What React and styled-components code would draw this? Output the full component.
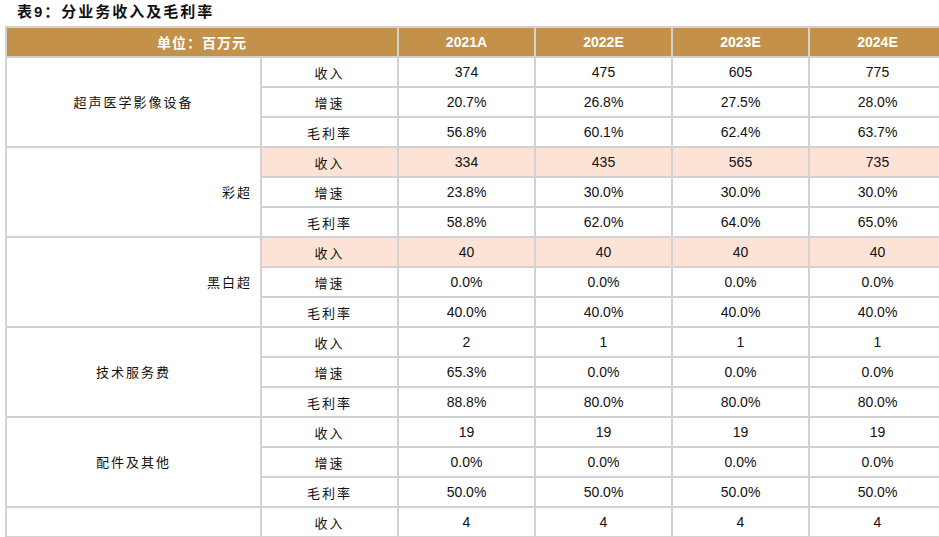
import React from "react";
import styled, {createGlobalStyle} from "styled-components";

const GlobalStyle = createGlobalStyle`
html, body {
margin: 0;
padding: 0;
background: #fff;
overflow: hidden;
}
body {
font-family: "Liberation Sans", Arial, "Noto Sans CJK SC", sans-serif;
color: #111;
}
`;

const Page = styled.div`
width: 939px;
height: 537px;
overflow: hidden;
padding: 0 0 0 5px;
box-sizing: border-box;
`;

const Title = styled.h1`
margin: 0;
padding: 3px 0 0 12px;
height: 24px;
box-sizing: border-box;
font-family: "Liberation Sans", "Noto Sans CJK SC", sans-serif;
font-size: 15px;
font-weight: bold;
line-height: 18px;
letter-spacing: 2px;
color: #111;
`;

const Table = styled.table`
border-collapse: collapse;
table-layout: fixed;
width: 940px;
margin-top: 2px;
`;

const Col = styled.col`
width: ${p => p.$w}px;
`;

const HeadCell = styled.th`
height: 28px;
padding: 0;
background: #c4914a;
color: #fff;
font-weight: bold;
font-size: 14px;
font-family: ${p => p.$cjk ? `"Noto Sans CJK SC", sans-serif` : `"Liberation Sans", Arial, sans-serif`};
border: 2px solid #d2d2d2;
text-align: center;
vertical-align: middle;
letter-spacing: ${p => p.$cjk ? "1px" : "0"};
`;

const GroupCell = styled.td`
padding: 0 8px 2px ${p => p.$right ? "0" : "8px"};
border: 2px solid #d2d2d2;
font-family: "Noto Sans CJK SC", sans-serif;
font-size: 13px;
text-align: ${p => p.$right ? "right" : "center"};
vertical-align: middle;
letter-spacing: 2px;
`;

const Cell = styled.td`
height: 28px;
padding: 0;
border: 2px solid #d2d2d2;
background: ${p => p.$hl ? "#fde3d6" : "#fff"};
font-family: ${p => p.$cjk ? `"Noto Sans CJK SC", sans-serif` : `"Liberation Sans", Arial, sans-serif`};
font-size: ${p => p.$cjk ? "13px" : "14px"};
text-align: center;
vertical-align: middle;
letter-spacing: ${p => p.$cjk ? "2px" : "0"};
`;

const widths = [255, 137, 137, 137, 137, 137];
const years = ["2021A", "2022E", "2023E", "2024E"];
const metrics = ["收入", "增速", "毛利率"];

const groups = [
  {name: "超声医学影像设备", right: false, hl: false, rows: [
    ["374", "475", "605", "775"],
    ["20.7%", "26.8%", "27.5%", "28.0%"],
    ["56.8%", "60.1%", "62.4%", "63.7%"],
  ]},
  {name: "彩超", right: true, hl: true, rows: [
    ["334", "435", "565", "735"],
    ["23.8%", "30.0%", "30.0%", "30.0%"],
    ["58.8%", "62.0%", "64.0%", "65.0%"],
  ]},
  {name: "黑白超", right: true, hl: true, rows: [
    ["40", "40", "40", "40"],
    ["0.0%", "0.0%", "0.0%", "0.0%"],
    ["40.0%", "40.0%", "40.0%", "40.0%"],
  ]},
  {name: "技术服务费", right: false, hl: false, rows: [
    ["2", "1", "1", "1"],
    ["65.3%", "0.0%", "0.0%", "0.0%"],
    ["88.8%", "80.0%", "80.0%", "80.0%"],
  ]},
  {name: "配件及其他", right: false, hl: false, rows: [
    ["19", "19", "19", "19"],
    ["0.0%", "0.0%", "0.0%", "0.0%"],
    ["50.0%", "50.0%", "50.0%", "50.0%"],
  ]},
  // next group is cut off at the bottom of the shot
  {name: "", right: false, hl: false, rows: [
    ["4", "4", "4", "4"],
  ]},
];

export default function App() {
  return (
    <Page>
      <GlobalStyle/>
      <Title>表9：分业务收入及毛利率</Title>
      <Table>
        <colgroup>
          {widths.map((w, i) => <Col key={i} $w={w}/>)}
        </colgroup>
        <thead>
          <tr>
            <HeadCell $cjk colSpan={2}>单位：百万元</HeadCell>
            {years.map(y => <HeadCell key={y}>{y}</HeadCell>)}
          </tr>
        </thead>
        <tbody>
          {groups.map((g, gi) => g.rows.map((vals, ri) => {
            const hl = g.hl && ri === 0;
            return (
              <tr key={gi + "-" + ri}>
                {ri === 0 && <GroupCell rowSpan={g.rows.length} $right={g.right}>{g.name}</GroupCell>}
                <Cell $cjk $hl={hl}>{metrics[ri]}</Cell>
                {vals.map((v, vi) => <Cell key={vi} $hl={hl}>{v}</Cell>)}
              </tr>
            );
          }))}
        </tbody>
      </Table>
    </Page>
  );
}
